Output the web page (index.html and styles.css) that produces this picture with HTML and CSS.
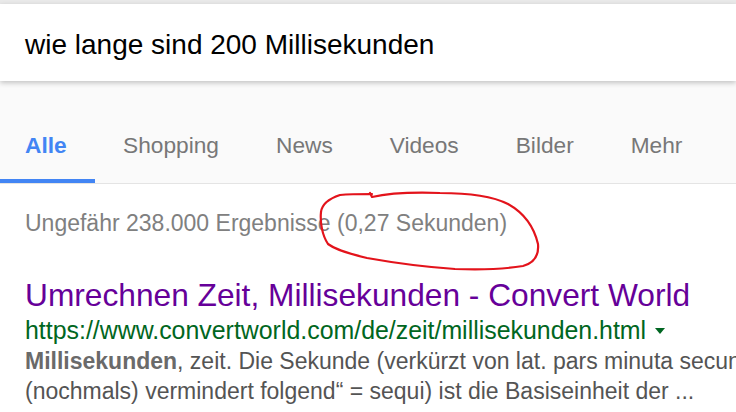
FILE: index.html
```html
<!DOCTYPE html>
<html lang="de">
<head>
<meta charset="utf-8">
<title>wie lange sind 200 Millisekunden</title>
<link rel="stylesheet" href="styles.css">
</head>
<body>
<div class="page">
  <header class="header">
    <div class="topstrip"></div>
    <div class="searchbox">wie lange sind 200 Millisekunden</div>
    <nav class="tabs">
      <span class="tab active">Alle</span>
      <span class="tab">Shopping</span>
      <span class="tab">News</span>
      <span class="tab">Videos</span>
      <span class="tab">Bilder</span>
      <span class="tab">Mehr</span>
    </nav>
  </header>
  <main class="results">
    <div class="stats">Ungefähr 238.000 Ergebnisse (0,27 Sekunden)</div>
    <div class="result">
      <div class="title">Umrechnen Zeit, Millisekunden - Convert World</div>
      <div class="url">https://www.convertworld.com/de/zeit/millisekunden.html<span class="arrow"></span></div>
      <div class="snippet">
        <div class="line"><b>Millisekunden</b>, zeit. Die Sekunde (verkürzt von lat. pars minuta secunda „zweiter verminderter Teil“, von secundus „zweiter,</div>
        <div class="line">(nochmals) vermindert folgend“ = sequi) ist die Basiseinheit der ...</div>
      </div>
    </div>
  </main>
  <svg class="scribble" width="736" height="412" viewBox="0 0 736 412" xmlns="http://www.w3.org/2000/svg">
    <path d="M370 193 L372 197 C385 194 410 192 440 193 C470 193 492 196 508 204 C524 213 534 227 538 244 C539 255 534 263 523 266 C505 269 480 270 455 269 C425 267 395 263 367 258 C350 254 336 250 328 244 C322 235 320 222 321 212 C322 204 328 199 340 195 C350 194 362 194 372 194"
      fill="none" stroke="#e3131b" stroke-width="2.2" stroke-linecap="round" stroke-linejoin="round"/>
  </svg>
</div>
</body>
</html>
```
FILE: styles.css
```css
html, body {
  margin: 0;
  padding: 0;
  background: #ffffff;
  overflow: hidden;
}
body {
  font-family: "Liberation Sans", Arial, sans-serif;
}
.page {
  position: relative;
  width: 736px;
  height: 412px;
  overflow: hidden;
}
.header {
  background: #fafafa;
  border-bottom: 1px solid #e4e4e4;
}
.topstrip {
  height: 4px;
  background: #e9e9e9;
}
.searchbox {
  position: relative;
  height: 77px;
  box-sizing: border-box;
  background: #ffffff;
  padding: 25px 25px 0 25px;
  font-size: 28px;
  line-height: 32px;
  color: #000000;
  white-space: nowrap;
  box-shadow: 0 2px 5px rgba(0, 0, 0, 0.22);
}
.tabs {
  display: flex;
  padding-top: 51px;
}
.tab {
  font-size: 22.7px;
  line-height: 26px;
  color: #777777;
  padding: 0 28.5px 21px 28.5px;
  border-bottom: 4px solid transparent;
  white-space: nowrap;
}
.tab.active {
  padding-left: 25px;
  padding-right: 28px;
  color: #4285f4;
  font-weight: bold;
  border-bottom-color: #4285f4;
}
.results {
  padding: 26px 0 0 25px;
}
.stats {
  font-size: 23px;
  line-height: 26px;
  color: #808080;
  white-space: nowrap;
}
.result {
  margin-top: 41px;
}
.title {
  font-size: 31.7px;
  line-height: 36px;
  color: #660099;
  white-space: nowrap;
}
.url {
  margin-top: 3px;
  font-size: 24.9px;
  line-height: 28px;
  color: #006621;
  white-space: nowrap;
}
.arrow {
  display: inline-block;
  width: 0;
  height: 0;
  margin-left: 9px;
  vertical-align: 5px;
  border-left: 5px solid transparent;
  border-right: 5px solid transparent;
  border-top: 6px solid #006621;
}
.snippet {
  margin-top: 2px;
  font-size: 23px;
  line-height: 30px;
  color: #545454;
}
.line {
  white-space: nowrap;
}
.line b {
  color: #6a6a6a;
}
.scribble {
  position: absolute;
  left: 0;
  top: 0;
  pointer-events: none;
}
```
